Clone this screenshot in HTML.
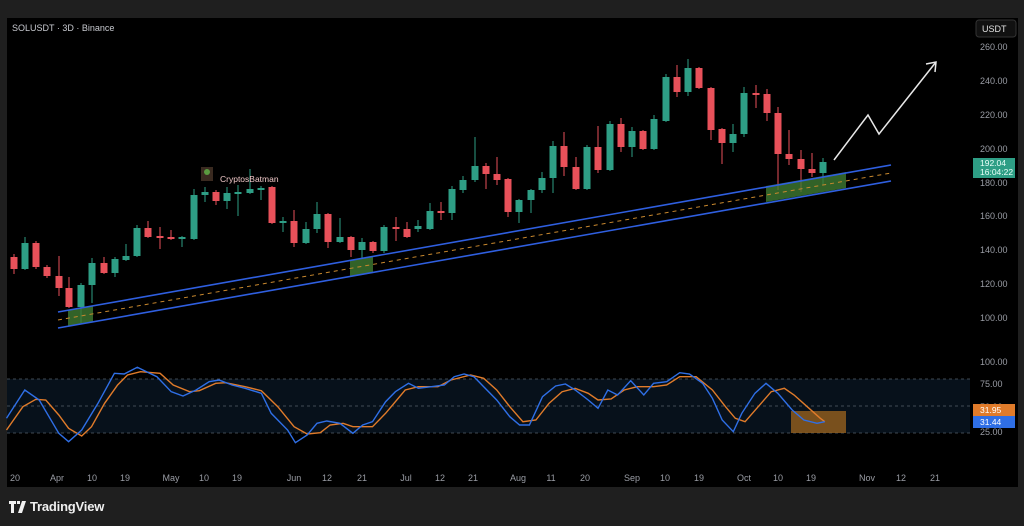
<!DOCTYPE html>
<html><head><meta charset="utf-8"><style>
html,body{margin:0;padding:0;background:#1f1f1f;width:1024px;height:526px;overflow:hidden;font-family:"Liberation Sans",sans-serif}
#c{position:absolute;left:7px;top:18px;width:1011px;height:469px;background:#000}
svg{position:absolute;left:0;top:0}
.t{font-size:9px;fill:#9a9da5}
</style></head><body>
<div id="c"></div>
<svg id="s" width="1024" height="526" xmlns="http://www.w3.org/2000/svg">
<rect x="7" y="379" width="963" height="54" fill="#07111b"/>
<line x1="7" y1="379" x2="970" y2="379" stroke="#55606a" stroke-dasharray="3,3" stroke-width="0.8"/>
<line x1="7" y1="406" x2="970" y2="406" stroke="#55606a" stroke-dasharray="3,3" stroke-width="0.8"/>
<line x1="7" y1="433" x2="970" y2="433" stroke="#55606a" stroke-dasharray="3,3" stroke-width="0.8"/>
<g id="cd"></g>
<polygon points="68,310 93,306 93,322 68,326" fill="#3f7a32" opacity="0.8"/>
<polygon points="350,261 373,257 373,273 350,277" fill="#3f7a32" opacity="0.8"/>
<polygon points="766,186 846,172 846,188 766,202" fill="#3f7a32" opacity="0.8"/>
<line x1="58" y1="312" x2="891" y2="165" stroke="#2f5fe0" stroke-width="1.6"/>
<line x1="58" y1="328" x2="891" y2="181" stroke="#2f5fe0" stroke-width="1.6"/>
<line x1="58" y1="320" x2="891" y2="173" stroke="#c8882e" stroke-width="1" stroke-dasharray="4,4"/>
<polyline points="834,160 868,115 879,134 936,62" fill="none" stroke="#e8e8e8" stroke-width="1.5"/>
<polyline points="926,64 936,62 935,72" fill="none" stroke="#e8e8e8" stroke-width="1.5"/>
<rect x="791" y="411" width="55" height="22" fill="#a0661f" opacity="0.75"/>
<polyline id="ob" fill="none" stroke="#e07b2a" stroke-width="1.4"/>
<polyline id="bl" fill="none" stroke="#2f6fe6" stroke-width="1.4"/>
<text x="12" y="31" class="t" style="fill:#c8cad0">SOLUSDT · 3D · Binance</text>
<rect x="201" y="167" width="12" height="14" fill="#3a2a20"/>
<circle cx="207" cy="172" r="3" fill="#5a9a40"/>
<text x="220" y="182" style="font-size:8.5px;fill:#f0c8c8">CryptosBatman</text>
<rect x="976" y="20" width="40" height="17" rx="3" fill="#111" stroke="#333"/>
<text x="982" y="32" style="font-size:9px;fill:#e0e0e0">USDT</text>
<g class="t">
<text x="980" y="50">260.00</text><text x="980" y="84">240.00</text><text x="980" y="118">220.00</text><text x="980" y="152">200.00</text><text x="980" y="186">180.00</text><text x="980" y="219">160.00</text><text x="980" y="253">140.00</text><text x="980" y="287">120.00</text><text x="980" y="321">100.00</text>
<text x="980" y="365">100.00</text><text x="980" y="387">75.00</text><text x="980" y="410">50.00</text><text x="980" y="435">25.00</text>
</g>
<rect x="973" y="158" width="42" height="20" fill="#2e9e85"/>
<text x="980" y="166" style="font-size:8.5px;fill:#e8fff8">192.04</text>
<text x="980" y="175" style="font-size:8.5px;fill:#e8fff8">16:04:22</text>
<rect x="973" y="404" width="42" height="12" fill="#e07b2a"/>
<text x="980" y="413" style="font-size:8.5px;fill:#fff">31.95</text>
<rect x="973" y="416" width="42" height="12" fill="#2f6fe6"/>
<text x="980" y="425" style="font-size:8.5px;fill:#fff">31.44</text>
<g class="t" id="ta"></g>
</svg>
<svg width="40" height="20" style="left:9px;top:500px"><path d="M0 1h7v3h-2v9h-3v-9h-2z M8 1h3v3h-3z M13 1h4l-4 12h-4z" fill="#f0f0f0"/></svg>
<div style="position:absolute;left:30px;top:499px;font-size:13px;font-weight:bold;color:#f0f0f0;letter-spacing:-0.2px">TradingView</div>
<script>
var G="#2e9e85",R="#e8515a";
var c=[[14,257,269,254,274,R],[25,243,269,237,270,G],[36,243,267,241,269,R],[47,267,276,265,278,R],[59,276,288,256,296,R],[69,288,307,277,308,R],[81,285,307,283,323,G],[92,263,285,258,303,G],[104,263,273,257,274,R],[115,259,273,257,277,G],[126,256,260,244,261,G],[137,228,256,225,257,G],[148,228,237,221,238,R],[160,236,238,227,249,R],[171,237,239,230,240,R],[182,237,239,236,247,G],[194,195,239,189,240,G],[205,192,195,187,202,G],[216,192,201,190,205,R],[227,193,201,187,209,G],[238,192,194,185,216,G],[250,189,193,169,194,G],[261,188,190,186,200,G],[272,187,223,186,224,R],[283,221,223,217,232,G],[294,221,243,210,247,R],[306,229,243,222,244,G],[317,214,229,202,233,G],[328,214,242,213,248,R],[340,237,242,218,243,G],[351,237,250,236,257,R],[362,242,250,238,258,G],[373,242,251,241,253,R],[384,227,251,225,253,G],[396,227,229,217,241,R],[407,229,237,222,238,R],[418,226,229,220,232,G],[430,211,229,203,230,G],[441,211,213,202,220,R],[452,189,213,186,220,G],[463,180,190,176,193,G],[475,166,180,137,182,G],[486,166,174,163,189,R],[497,174,180,157,185,R],[508,179,212,178,217,R],[519,200,212,199,223,G],[531,190,200,189,213,G],[542,178,190,172,193,G],[553,146,178,141,193,G],[564,146,167,132,176,R],[576,167,189,157,190,R],[587,147,189,145,190,G],[598,147,170,126,173,R],[610,124,170,121,171,G],[621,124,147,118,152,R],[632,131,147,127,157,G],[643,131,149,130,150,R],[654,119,149,115,150,G],[666,77,121,74,122,G],[677,77,92,65,97,R],[688,68,92,59,96,G],[699,68,88,67,89,R],[711,88,130,87,140,R],[722,129,143,128,164,R],[733,134,143,124,152,G],[744,93,134,87,137,G],[756,93,95,85,108,R],[767,94,113,89,121,R],[778,113,154,107,190,R],[789,154,159,130,165,R],[801,159,169,150,192,R],[812,169,173,153,177,R],[823,162,173,158,185,G]];
var h="";c.forEach(function(d){h+='<line x1="'+d[0]+'" x2="'+d[0]+'" y1="'+d[3]+'" y2="'+d[4]+'" stroke="'+d[5]+'" stroke-width="1"/><rect x="'+(d[0]-3.5)+'" y="'+d[1]+'" width="7" height="'+Math.max(1,d[2]-d[1])+'" fill="'+d[5]+'"/>';});
document.getElementById("cd").innerHTML=h;
function P(a){var s="";for(var i=0;i<a.length;i+=2)s+=(a[i]/1.53+0).toFixed(1)+","+(a[i+1]/3+360).toFixed(1)+" ";return s;}
document.getElementById("bl").setAttribute("points",P([10,175,38,90,60,120,90,220,105,245,125,210,150,130,175,40,190,42,210,22,240,50,262,95,280,108,300,90,320,65,335,60,355,75,375,85,400,100,415,160,440,210,452,248,470,225,485,190,500,183,520,190,540,220,555,195,570,185,590,125,605,95,625,70,640,85,660,80,680,75,695,50,710,42,725,50,740,80,760,120,780,170,795,195,810,195,830,110,850,78,865,72,880,90,900,120,915,145,930,90,945,105,965,62,985,105,1000,70,1020,65,1040,38,1055,42,1075,70,1090,115,1105,180,1122,215,1135,160,1155,100,1172,70,1190,100,1212,150,1230,180,1250,190,1262,185]));
document.getElementById("ob").setAttribute("points",P([10,210,35,140,55,118,70,120,90,165,105,205,125,228,140,200,160,130,180,75,195,45,215,35,245,40,265,75,290,95,305,92,330,70,345,68,375,80,400,92,425,140,450,200,470,222,490,218,505,195,525,190,540,200,570,200,590,160,620,90,640,80,670,80,690,60,720,45,740,55,760,90,780,140,800,185,820,180,840,130,860,95,880,85,900,100,915,120,935,117,955,90,975,80,1000,80,1020,75,1040,50,1065,50,1090,90,1110,140,1125,175,1140,185,1160,140,1180,95,1200,85,1215,105,1235,140,1255,175,1262,185]));
var L=[[15,"20"],[57,"Apr"],[92,"10"],[125,"19"],[171,"May"],[204,"10"],[237,"19"],[294,"Jun"],[327,"12"],[362,"21"],[406,"Jul"],[440,"12"],[473,"21"],[518,"Aug"],[551,"11"],[585,"20"],[632,"Sep"],[665,"10"],[699,"19"],[744,"Oct"],[778,"10"],[811,"19"],[867,"Nov"],[901,"12"],[935,"21"]];
var t="";L.forEach(function(l){t+='<text x="'+l[0]+'" y="481" text-anchor="middle">'+l[1]+'</text>';});
document.getElementById("ta").innerHTML=t;
</script>
</body></html>
